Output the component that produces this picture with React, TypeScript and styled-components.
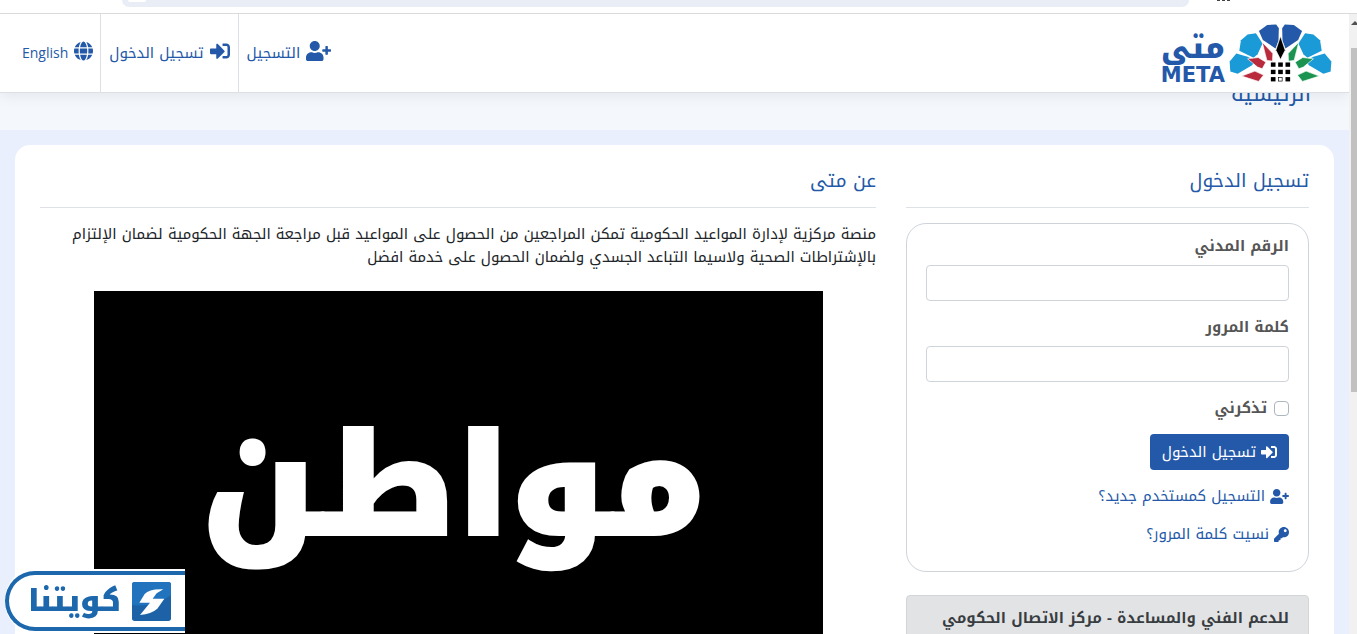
import React from "react";
import styled, { createGlobalStyle } from "styled-components";
import { FaGlobe, FaKey, FaSignInAlt, FaUserPlus } from "react-icons/fa";

const blue = "#2359a8";
const arabic = `"Noto Kufi Arabic", "Noto Sans Arabic", "Noto Sans", "DejaVu Sans", sans-serif`;

const GlobalStyle = createGlobalStyle`
  * { box-sizing: border-box; }
  html, body, #root { height: 100%; }
  body { margin: 0; background: #fff; color: #212529; font: 15px/24px ${arabic}; overflow: hidden; }
  a { color: ${blue}; text-decoration: none; }
`;

const Screen = styled.div`
  display: flex;
  flex-direction: column;
  height: 100vh;
  overflow: hidden;
`;

const BrowserBar = styled.div`
  flex: none;
  display: flex;
  align-items: flex-start;
  gap: 28px;
  height: 14px;
  padding: 0 126px 0 122px;
  background: #fff;
  border-bottom: 1px solid #d9dadc;
`;

const AddressField = styled.div`
  flex: 1;
  height: 7px;
  padding-left: 6px;
  border-radius: 0 0 14px 14px;
  background: #e9edf6;
  &::before {
    content: "";
    display: block;
    width: 18px;
    height: 2px;
    border-radius: 0 0 9px 9px;
    background: #fff;
  }
`;

const ToolbarMark = styled.div`
  width: 14px;
  height: 1px;
  background: repeating-linear-gradient(90deg, #444 0 3px, #fff 3px 5px);
`;

const Viewport = styled.div`
  flex: 1;
  display: flex;
  min-height: 0;
`;

const Page = styled.div`
  flex: 1;
  min-width: 0;
  display: flex;
  flex-direction: column;
  background: #e9effc;
  overflow: hidden;
`;

const ScrollTrack = styled.div`
  flex: none;
  display: flex;
  flex-direction: column;
  gap: 23px;
  width: 8px;
  padding: 7px 0 0 2px;
  overflow: hidden;
  background: #f1f1f1;
`;

const ScrollArrow = styled.div`
  width: 8px;
  border: solid transparent;
  border-width: 0 4px 4px;
  border-bottom-color: #505050;
`;

const ScrollThumb = styled.div`
  height: 344px;
  background: #c1c1c1;
`;

const Header = styled.header`
  flex: none;
  position: relative;
  z-index: 1;
  display: flex;
  justify-content: space-between;
  height: 79px;
  background: #fff;
  border-bottom: 1px solid #dcdfe3;
  box-shadow: 0 2px 14px rgba(0, 0, 0, 0.08);
`;

const Brand = styled.a`
  display: flex;
  align-items: center;
  gap: 4px;
  padding-right: 17px;
`;

const BrandNames = styled.span`
  display: flex;
  flex-direction: column;
  align-items: center;
  padding-top: 14px;
  font-weight: 900;
`;

const BrandArabic = styled.span`
  font-size: 29px;
  line-height: 30px;
`;

const BrandLatin = styled.span`
  font-family: "DejaVu Sans", sans-serif;
  font-size: 21px;
  line-height: 22px;
`;

const Nav = styled.nav`
  display: flex;
`;

const NavLink = styled.a<{ $icon: number; $last?: boolean }>`
  display: flex;
  align-items: center;
  gap: 6px;
  padding: 0 ${(p) => (p.$last ? "7px 0 22px" : "8px")};
  border-left: ${(p) => (p.$last ? "none" : "1px solid #dcdfe3")};
  svg { width: ${(p) => p.$icon}px; height: 20px; margin-bottom: 4px; }
`;

const Latin = styled.span`
  font-family: "Open Sans", sans-serif;
  font-size: 14px;
`;

const TitleStrip = styled.div`
  flex: none;
  display: flex;
  align-items: flex-end;
  height: 37px;
  padding: 0 38px 18px;
  background: #f4f7fb;
`;

const PageTitle = styled.h1`
  margin: 0;
  color: ${blue};
  font-size: 22px;
  line-height: 36px;
  font-weight: 400;
`;

const Card = styled.main`
  flex: 1 0 auto;
  display: grid;
  grid-template-columns: minmax(0, 1fr) minmax(0, 2fr);
  margin: 15px 15px 0;
  padding: 20px 10px;
  border-radius: 15px 15px 0 0;
  background: #fff;
`;

const Column = styled.section`
  padding: 0 15px;
`;

const SectionTitle = styled.h2`
  margin: 0 0 15px;
  padding-bottom: 9px;
  border-bottom: 1px solid #dee2e6;
  color: ${blue};
  font-size: 19px;
  line-height: 33px;
  font-weight: 400;
`;

const LoginForm = styled.form`
  display: flex;
  flex-direction: column;
  align-items: flex-start;
  padding: 10px 19px 11px;
  border: 1px solid #ced4da;
  border-radius: 20px;
`;

const FieldLabel = styled.label`
  margin-bottom: 7px;
  color: #555;
  font-weight: 700;
`;

const TextField = styled.input`
  width: 100%;
  height: 36px;
  margin-bottom: 14px;
  padding: 6px 12px;
  border: 1px solid #ced4da;
  border-radius: 4px;
  background: #fff;
  font: inherit;
`;

const RememberRow = styled.label`
  display: flex;
  align-items: center;
  gap: 7px;
  margin-bottom: 14px;
  color: #555;
  font-weight: 700;
`;

const Tick = styled.input`
  appearance: none;
  width: 15px;
  height: 15px;
  margin: 0;
  border: 1px solid #adb5bd;
  border-radius: 4px;
  background: #fff;
`;

const SubmitButton = styled.button`
  display: flex;
  align-items: center;
  gap: 5px;
  height: 36px;
  margin-bottom: 14px;
  padding: 0 12px;
  border: 0;
  border-radius: 4px;
  background: ${blue};
  color: #fff;
  font: inherit;
  svg { width: 16px; height: 16px; }
`;

const FormLink = styled.a<{ $icon: number }>`
  display: flex;
  align-items: center;
  gap: 5px;
  margin-bottom: 14px;
  svg { width: ${(p) => p.$icon}px; height: 15px; }
`;

const SupportBox = styled.aside`
  margin-top: 23px;
  padding: 10px 19px;
  border: 1px solid #d3d6d8;
  border-radius: 4px;
  background: #e2e3e5;
  color: #383d41;
  font-weight: 700;
`;

const Intro = styled.p`
  margin: 0 0 22px;
  line-height: 23px;
`;

const VideoFrame = styled.div`
  display: flex;
  align-items: center;
  justify-content: center;
  width: 729px;
  max-width: 100%;
  aspect-ratio: 16 / 9;
  margin: 0 auto;
  padding: 0 10px 18px 0;
  background: #000;
  color: #fff;
  font-size: 139px;
  line-height: 1;
  font-weight: 900;
  -webkit-text-stroke: 4px #fff;
`;

const Watermark = styled.div`
  position: fixed;
  left: 5px;
  bottom: 3px;
  z-index: 2;
  display: flex;
  align-items: center;
  justify-content: flex-end;
  gap: 11px;
  direction: ltr;
  width: 180px;
  height: 60px;
  padding-right: 14px;
  border: solid #1d67ad;
  border-width: 4px 0 4px 4px;
  border-radius: 31px 0 0 31px;
  box-shadow: 0 -2px 0 #fff, 0 2px 0 #fff;
  background: #fff;
  color: #1d67ad;
  font-size: 30px;
  line-height: 40px;
  font-weight: 900;
`;

function MetaMark() {
  const petals = (
    <>
      <path fill="#2359a8" d="M102 40 L127 22 L154 21 L162 32 L161 70 L152 93 L114 67 Z" />
      <path fill="#1a9ad6" d="M43 100 L48 68 L68 51 L93 47 L113 78 L98 110 L86 121 Z" />
      <path fill="#1a9ad6" d="M14 132 L34 108 L68 118 L93 131 L80 144 L38 169 L16 162 Z" />
    </>
  );
  const kites = (
    <>
      <path d="M112 74 L144 108 L143 131 L126 129 Z" />
      <path d="M68 124 L100 120 L123 134 L112 154 L98 149 Z" />
      <path d="M50 176 L90 161 L116 173 L101 192 Z" />
    </>
  );
  const mirror = "translate(334 0) scale(-1 1)";
  return (
    <svg width="103" height="58" viewBox="12 20 310 173" aria-hidden="true">
      {petals}
      <g transform={mirror}>{petals}</g>
      <g fill="#b92b3c" stroke="#fff" strokeWidth="2">{kites}</g>
      <g fill="#1a9450" stroke="#fff" strokeWidth="2" transform={mirror}>{kites}</g>
      <path d="M167 56 L181 98 L167 126 L153 98 Z" fill="#000" stroke="#fff" strokeWidth="2" />
      {[135, 157, 179].map((y) =>
        [138, 160, 182].map((x) =>
          x === 160 && y === 179 ? (
            <rect key={`${x}-${y}`} x={x + 1} y={y + 1} width="11" height="11" fill="#fff" stroke="#000" strokeWidth="2" />
          ) : (
            <rect key={`${x}-${y}`} x={x} y={y} width="14" height="13" fill="#000" />
          )
        )
      )}
    </svg>
  );
}

function KuwaitnaMark() {
  return (
    <svg width="39" height="39" viewBox="0 0 117 117" aria-hidden="true">
      <rect width="117" height="117" rx="8" fill="#1d62a6" />
      <path d="M0 8 Q0 0 8 0 H109 Q117 0 117 8 V40 Q60 80 0 68 Z" fill="#2173bd" />
      <path d="M94 22 Q52 20 38 36 L22 62 H54 L24 99 Q58 96 76 80 L97 50 H62 L74 34 Z" fill="#fff" />
    </svg>
  );
}

export default function App() {
  return (
    <Screen>
      <GlobalStyle />
      <BrowserBar>
        <AddressField />
        <ToolbarMark />
      </BrowserBar>
      <Viewport>
        <Page dir="rtl" lang="ar">
          <Header>
            <Brand href="#home">
              <MetaMark />
              <BrandNames>
                <BrandArabic>متى</BrandArabic>
                <BrandLatin>META</BrandLatin>
              </BrandNames>
            </Brand>
            <Nav>
              <NavLink href="#register" $icon={25}><FaUserPlus />التسجيل</NavLink>
              <NavLink href="#login" $icon={20}><FaSignInAlt />تسجيل الدخول</NavLink>
              <NavLink href="#english" $icon={19} $last><FaGlobe /><Latin>English</Latin></NavLink>
            </Nav>
          </Header>
          <TitleStrip>
            <PageTitle>الرئيسية</PageTitle>
          </TitleStrip>
          <Card>
            <Column>
              <SectionTitle>تسجيل الدخول</SectionTitle>
              <LoginForm>
                <FieldLabel htmlFor="civil-id">الرقم المدني</FieldLabel>
                <TextField id="civil-id" type="text" />
                <FieldLabel htmlFor="password">كلمة المرور</FieldLabel>
                <TextField id="password" type="password" />
                <RememberRow htmlFor="remember">
                  <Tick id="remember" type="checkbox" />
                  تذكرني
                </RememberRow>
                <SubmitButton type="button"><FaSignInAlt />تسجيل الدخول</SubmitButton>
                <FormLink href="#register" $icon={19}><FaUserPlus />التسجيل كمستخدم جديد؟</FormLink>
                <FormLink href="#forgot" $icon={15}><FaKey />نسيت كلمة المرور؟</FormLink>
              </LoginForm>
              <SupportBox>للدعم الفني والمساعدة - مركز الاتصال الحكومي</SupportBox>
            </Column>
            <Column>
              <SectionTitle>عن متى</SectionTitle>
              <Intro>
                منصة مركزية لإدارة المواعيد الحكومية تمكن المراجعين من الحصول على المواعيد قبل مراجعة الجهة الحكومية لضمان الإلتزام بالإشتراطات الصحية ولاسيما التباعد الجسدي ولضمان الحصول على خدمة افضل
              </Intro>
              <VideoFrame>مواطن</VideoFrame>
            </Column>
          </Card>
        </Page>
        <ScrollTrack>
          <ScrollArrow />
          <ScrollThumb />
        </ScrollTrack>
      </Viewport>
      <Watermark>
        <span lang="ar">كويتنا</span>
        <KuwaitnaMark />
      </Watermark>
    </Screen>
  );
}
